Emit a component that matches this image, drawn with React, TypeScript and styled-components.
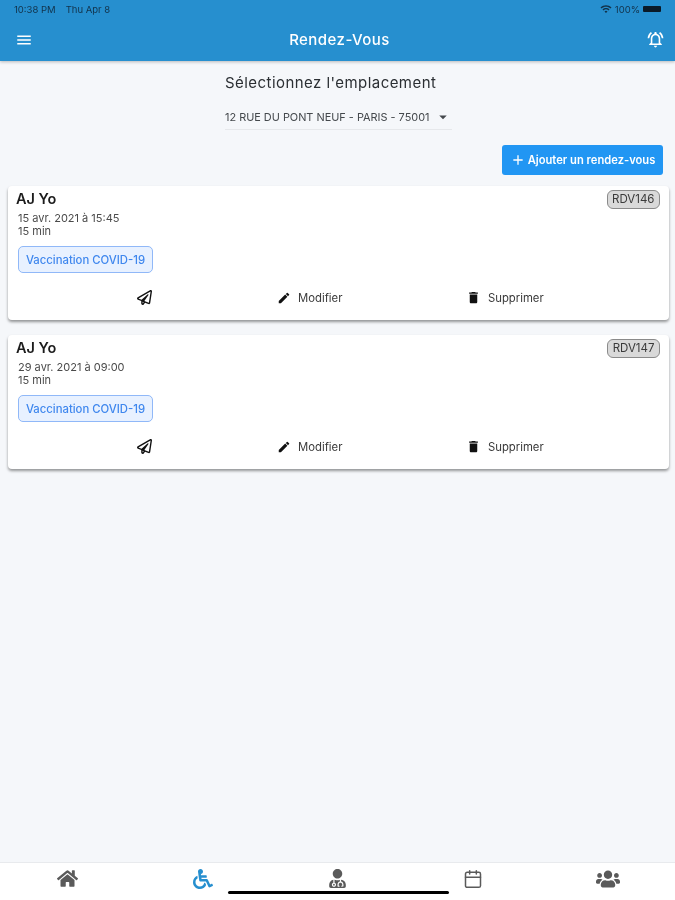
import React from 'react';
import styled, { createGlobalStyle } from 'styled-components';
import { FaHome, FaUserMd, FaUsers, FaRegPaperPlane, FaWheelchair } from 'react-icons/fa';
import { MdAdd, MdArrowDropDown, MdDelete, MdEdit, MdMenu, MdOutlineNotificationsActive, MdWifi } from 'react-icons/md';
import { Calendar } from 'lucide-react';

const GlobalStyle = createGlobalStyle`
  html, body {
    margin: 0;
    padding: 0;
    background: #f5f7fa;
    font-family: 'Inter', 'Roboto', 'Liberation Sans', sans-serif;
  }
`;

const Page = styled.div`
  position: relative;
  width: 675px;
  height: 900px;
  display: flex;
  flex-direction: column;
  overflow: hidden;
  background: #f5f7fa;
  filter: blur(0.55px);
`;

const Header = styled.header`
  height: 61px;
  flex: none;
  box-sizing: border-box;
  background: #268fcf;
  box-shadow: 0 1px 3px rgba(0, 0, 0, 0.25);
  display: flex;
  flex-direction: column;
`;

const StatusBar = styled.div`
  height: 18px;
  padding: 0 14px;
  display: flex;
  align-items: center;
  justify-content: space-between;
  font-size: 9.5px;
  color: #12324a;
`;

const StatusGroup = styled.div`
  display: flex;
  align-items: center;
  gap: 3px;
`;

const StatusDate = styled.span`
  margin-left: 7px;
`;

const Battery = styled.span`
  width: 18px;
  height: 6px;
  border-radius: 1px;
  background: #0a1a28;
`;

const AppBar = styled.div`
  flex: 1;
  padding: 0 10px 0 15px;
  display: flex;
  align-items: center;
  justify-content: space-between;
  color: #fff;
`;

const AppTitle = styled.h1`
  margin: 0;
  font-size: 15px;
  font-weight: 500;
  letter-spacing: 0.45px;
`;

const Content = styled.main`
  flex: 1;
  padding: 13px 6px 0 8px;
  display: flex;
  flex-direction: column;
`;

const Location = styled.section`
  align-self: center;
  width: 227px;
  display: flex;
  flex-direction: column;
`;

const LocationLabel = styled.div`
  font-size: 15px;
  font-weight: 400;
  letter-spacing: 0.45px;
  color: #2b2f33;
  white-space: nowrap;
  line-height: 18px;
`;

const LocationSelect = styled.div`
  margin-top: 15px;
  height: 19px;
  border-bottom: 1px solid #e6e8eb;
  padding-bottom: 3px;
  display: flex;
  align-items: center;
  justify-content: space-between;
  font-size: 10.9px;
  color: #44484c;
  white-space: nowrap;
`;

const AddRow = styled.div`
  margin-top: 15px;
  padding-right: 6px;
  display: flex;
  justify-content: flex-end;
`;

const AddButton = styled.button`
  width: 161px;
  height: 30px;
  border: none;
  border-radius: 3px;
  padding: 0;
  background: #2196f3;
  color: #fff;
  font-family: inherit;
  font-size: 11.2px;
  font-weight: 600;
  white-space: nowrap;
  display: flex;
  align-items: center;
  justify-content: center;
  gap: 2px;
`;

const Card = styled.article`
  height: 134px;
  box-sizing: border-box;
  background: #fff;
  border-radius: 4px;
  box-shadow: 0 2px 3px rgba(0, 0, 0, 0.4);
  padding: 4px 8px 0;
  display: flex;
  flex-direction: column;
  margin-top: ${(props: { $first?: boolean }) => (props.$first ? '11px' : '15px')};
`;

const CardTop = styled.div`
  display: flex;
  justify-content: space-between;
  align-items: flex-start;
`;

const Name = styled.div`
  font-size: 14.5px;
  font-weight: 600;
  line-height: 18px;
  color: #1c1c1c;
`;

const Reference = styled.span`
  box-sizing: border-box;
  height: 19px;
  margin-right: 1px;
  padding: 0 4.5px;
  border: 1px solid #8a8a8a;
  border-radius: 6px;
  background: #d9d9d9;
  color: #3a3a3a;
  font-size: 11.5px;
  line-height: 17px;
`;

const Details = styled.div`
  margin: 3px 0 0 2px;
  font-size: 11px;
  line-height: 12.5px;
  color: #4a4a4a;
`;

const Chip = styled.div`
  align-self: flex-start;
  box-sizing: border-box;
  margin: 9px 0 0 2px;
  width: 135px;
  height: 27px;
  border: 1px solid #90b8f8;
  border-radius: 5px;
  background: #e8f1ff;
  color: #3f87ee;
  font-size: 11.3px;
  font-weight: 500;
  white-space: nowrap;
  display: flex;
  align-items: center;
  justify-content: center;
`;

const Actions = styled.div`
  margin-top: 17px;
  padding-left: 121px;
  display: grid;
  grid-template-columns: 140px 189px auto;
  align-items: center;
`;

const Action = styled.div`
  display: flex;
  align-items: center;
  gap: 7px;
  font-size: 11.3px;
  color: #3a3a3a;
`;

const BottomNav = styled.nav`
  height: 38px;
  flex: none;
  box-sizing: border-box;
  background: #fff;
  border-top: 1px solid #e8eaed;
  display: grid;
  grid-template-columns: repeat(5, 1fr);
`;

const NavItem = styled.div`
  height: 31px;
  display: flex;
  align-items: center;
  justify-content: center;
  color: ${(props: { $active?: boolean }) => (props.$active ? '#268fcf' : '#5a5a5a')};
`;

const HomeIndicator = styled.div`
  position: absolute;
  left: 228px;
  bottom: 6px;
  width: 221px;
  height: 3.5px;
  border-radius: 2px;
  background: #000;
`;

const appointments = [
  { id: 'RDV146', date: '15 avr. 2021 à 15:45' },
  { id: 'RDV147', date: '29 avr. 2021 à 09:00' },
];

export default function App() {
  return (
    <Page>
      <GlobalStyle />
      <Header>
        <StatusBar>
          <StatusGroup>
            <span>10:38 PM</span>
            <StatusDate>Thu Apr 8</StatusDate>
          </StatusGroup>
          <StatusGroup>
            <MdWifi size={12} />
            <span>100%</span>
            <Battery />
          </StatusGroup>
        </StatusBar>
        <AppBar>
          <MdMenu size={18} />
          <AppTitle>Rendez-Vous</AppTitle>
          <MdOutlineNotificationsActive size={19} />
        </AppBar>
      </Header>
      <Content>
        <Location>
          <LocationLabel>Sélectionnez l'emplacement</LocationLabel>
          <LocationSelect>
            <span>12 RUE DU PONT NEUF - PARIS - 75001</span>
            <MdArrowDropDown size={18} />
          </LocationSelect>
        </Location>
        <AddRow>
          <AddButton>
            <MdAdd size={16} />
            Ajouter un rendez-vous
          </AddButton>
        </AddRow>
        {appointments.map((a, i) => (
          <Card key={a.id} $first={i === 0}>
            <CardTop>
              <Name>AJ Yo</Name>
              <Reference>{a.id}</Reference>
            </CardTop>
            <Details>
              {a.date}
              <br />
              15 min
            </Details>
            <Chip>Vaccination COVID-19</Chip>
            <Actions>
              <Action>
                <FaRegPaperPlane size={15} color="#111" />
              </Action>
              <Action>
                <MdEdit size={14} color="#111" />
                Modifier
              </Action>
              <Action>
                <MdDelete size={15} color="#111" />
                Supprimer
              </Action>
            </Actions>
          </Card>
        ))}
      </Content>
      <BottomNav>
        <NavItem><FaHome size={21} /></NavItem>
        <NavItem $active><FaWheelchair size={20} /></NavItem>
        <NavItem><FaUserMd size={19} /></NavItem>
        <NavItem><Calendar size={20} strokeWidth={1.8} /></NavItem>
        <NavItem><FaUsers size={24} /></NavItem>
      </BottomNav>
      <HomeIndicator />
    </Page>
  );
}
